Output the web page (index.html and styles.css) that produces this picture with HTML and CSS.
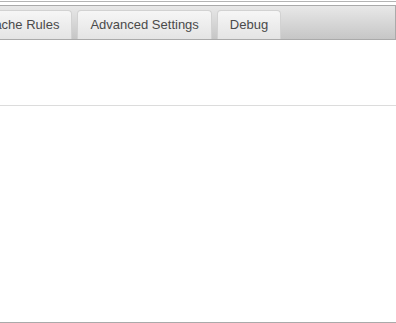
FILE: index.html
```html
<!DOCTYPE html>
<html lang="en">
<head>
    <meta charset="UTF-8">
    <title>Settings</title>
    <link rel="stylesheet" href="styles.css">
</head>
<body>
    <div class="page">
        <div class="tab-bar">
            <ul class="tabs">
                <li class="tab">Cache Rules</li>
                <li class="tab">Advanced Settings</li>
                <li class="tab">Debug</li>
            </ul>
        </div>
        <div class="header-row"></div>
        <div class="body-area"></div>
    </div>
</body>
</html>
```

FILE: styles.css
```css
* {box-sizing: border-box; margin: 0; padding: 0;}
body {
    background: #fff;
    font-family: 'Liberation Sans', Arial, sans-serif;
    color: #444;
    overflow: hidden;
}
.page {
    margin-top: 1px;
    border-top: 1px solid #b4b4b4;
    padding-top: 3px;
    height: 322px;
    border-bottom: 1px solid #aaa;
}
.tab-bar {
    height: 35px;
    border: 1px solid #aaa;
    border-left: none;
    background: linear-gradient(#e8e8e8, #c6c6c6);
    overflow: hidden;
}
.tabs {
    list-style: none;
    display: flex;
    gap: 5px;
    margin-left: -28px;
    padding-top: 4px;
}
.tab {
    height: 29px;
    padding: 0 12px;
    line-height: 28px;
    font-size: 13px;
    color: #4a4a4a;
    background: linear-gradient(#f6f6f6, #e4e4e4);
    border: 1px solid #d2d2d2;
    border-bottom: none;
    border-radius: 4px 4px 0 0;
    white-space: nowrap;
}
.header-row {
    height: 66px;
    border-bottom: 1px solid #dcdcdc;
}
```
